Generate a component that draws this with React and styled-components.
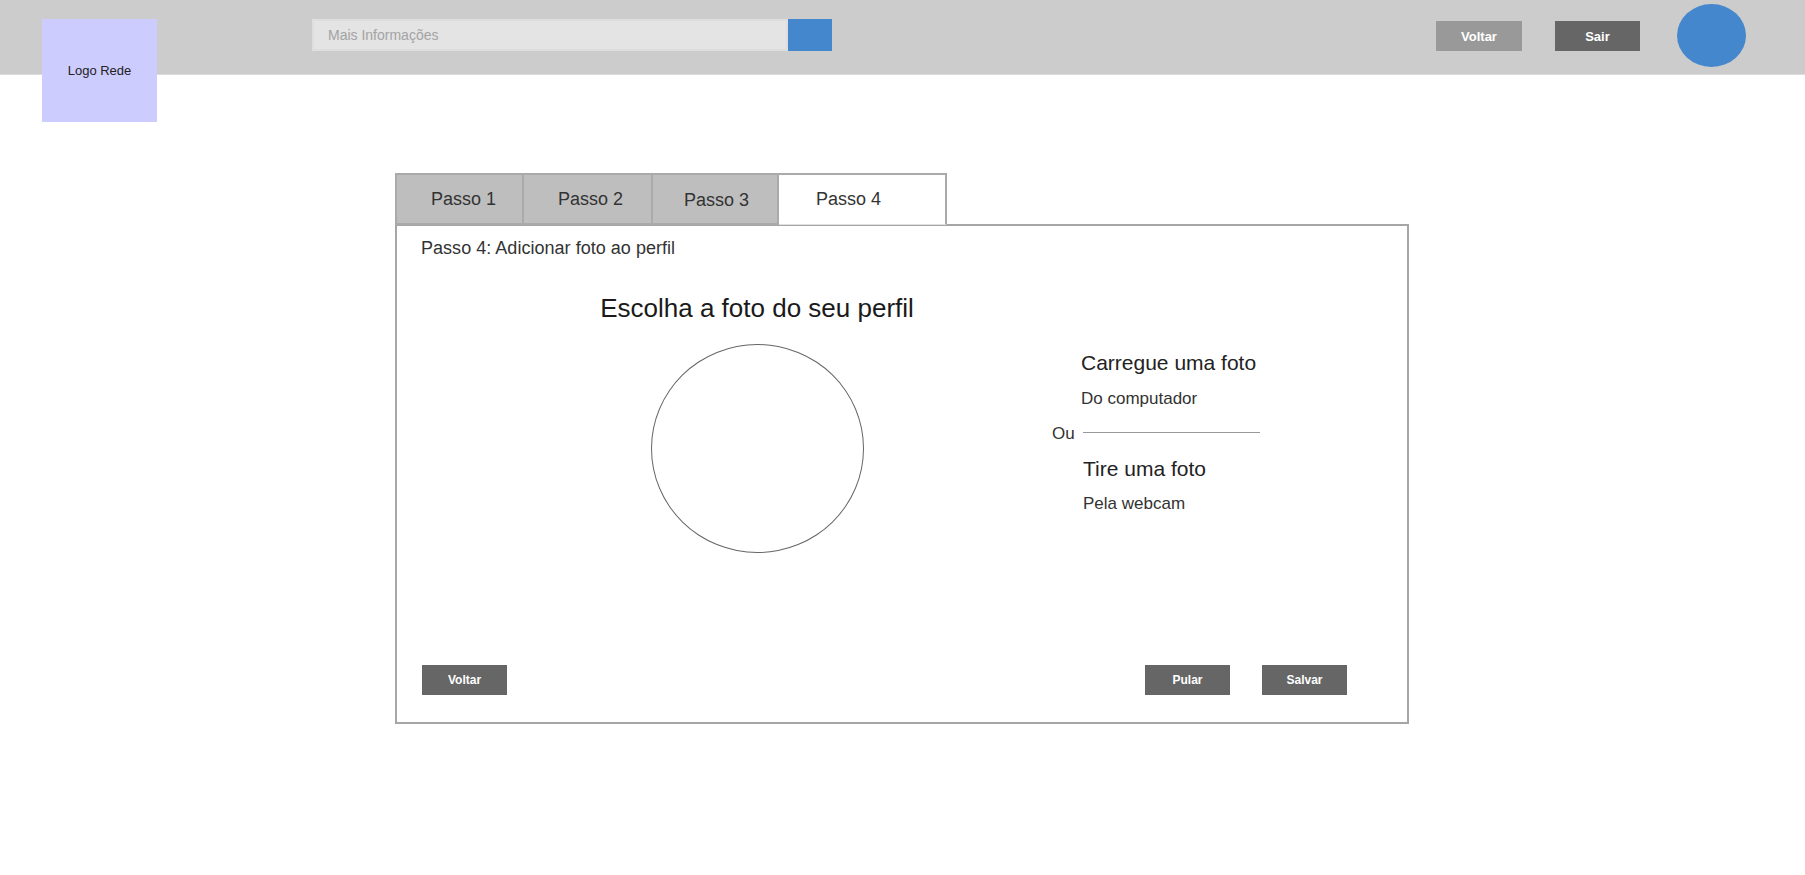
import styled, { createGlobalStyle } from 'styled-components';

const GlobalStyle = createGlobalStyle`
  html, body {
    margin: 0;
    padding: 0;
    background: #fff;
    font-family: "Liberation Sans", Arial, sans-serif;
  }
`;

function App() {
  return (
    <>
      <GlobalStyle />
      <Header>
        <Logo>Logo Rede</Logo>
        <Search>
          <SearchField>Mais Informações</SearchField>
          <SearchButton />
        </Search>
        <HeaderActions>
          <Button $width={86} $bg="#999999" $size={13}>Voltar</Button>
          <Button $width={85} $size={13} $gap={33}>Sair</Button>
          <Avatar />
        </HeaderActions>
      </Header>

      <Main>
        <Tabs>
          <Tab $width={129} $pad={34}>Passo 1</Tab>
          <Tab $width={129} $pad={34} $joined>Passo 2</Tab>
          <Tab $width={126} $pad={31} $joined $down>Passo 3</Tab>
          <ActiveTab>Passo 4</ActiveTab>
        </Tabs>
        <Panel>
          <PanelTitle>Passo 4: Adicionar foto ao perfil</PanelTitle>
          <Body>
            <PhotoColumn>
              <PhotoHeading>Escolha a foto do seu perfil</PhotoHeading>
              <PhotoCircle />
            </PhotoColumn>
            <Options>
              <Option>
                <OptionTitle>Carregue uma foto</OptionTitle>
                <OptionText>Do computador</OptionText>
              </Option>
              <Divider>
                <DividerLabel>Ou</DividerLabel>
                <DividerLine />
              </Divider>
              <Option $indent={2}>
                <OptionTitle>Tire uma foto</OptionTitle>
                <OptionText $tight>Pela webcam</OptionText>
              </Option>
            </Options>
          </Body>
          <Footer>
            <Button $width={85} $size={12}>Voltar</Button>
            <FooterRight>
              <Button $width={85} $size={12}>Pular</Button>
              <Button $width={85} $size={12} $gap={32}>Salvar</Button>
            </FooterRight>
          </Footer>
        </Panel>
      </Main>
    </>
  );
}

const Header = styled.header`
  display: flex;
  align-items: flex-start;
  box-sizing: border-box;
  height: 75px;
  padding-left: 42px;
  background: #cccccc;
  border-bottom: 1px solid #dcdcdc;
`;

const Logo = styled.div`
  display: flex;
  align-items: center;
  justify-content: center;
  flex-shrink: 0;
  width: 115px;
  height: 103px;
  margin-top: 19px;
  background: #ccccff;
  color: #222;
  font-size: 13px;
`;

const Search = styled.div`
  display: flex;
  margin: 19px 0 0 155px;
`;

const SearchField = styled.div`
  display: flex;
  align-items: center;
  box-sizing: border-box;
  width: 476px;
  height: 32px;
  padding-left: 14px;
  background: #e4e4e4;
  border: 2px solid #dedede;
  color: #a3a3a3;
  font-size: 14px;
`;

const SearchButton = styled.div`
  width: 44px;
  height: 32px;
  background: #4487cc;
`;

const HeaderActions = styled.div`
  display: flex;
  align-items: center;
  height: 72px;
  margin-left: 604px;
`;

const Button = styled.div`
  display: flex;
  align-items: center;
  justify-content: center;
  width: ${props => props.$width}px;
  height: 30px;
  margin-left: ${props => props.$gap || 0}px;
  background: ${props => props.$bg || '#666666'};
  color: #fff;
  font-size: ${props => props.$size}px;
  font-weight: 700;
`;

const Avatar = styled.div`
  width: 69px;
  height: 63px;
  margin: 0 0 2px 37px;
  border-radius: 50%;
  background: #4487cc;
`;

const Main = styled.main`
  width: 1014px;
  margin: 98px 0 0 395px;
`;

const Tabs = styled.div`
  display: flex;
  height: 52px;
  margin-bottom: -1px;
  position: relative;
  z-index: 1;
`;

const Tab = styled.div`
  box-sizing: border-box;
  width: ${props => props.$width}px;
  padding: ${props => (props.$down ? 15 : 14)}px 0 0 ${props => props.$pad}px;
  background: #bebebe;
  border: 2px solid #aaaaaa;
  border-left-width: ${props => (props.$joined ? 0 : 2)}px;
  color: #333;
  font-size: 18px;
`;

const ActiveTab = styled.div`
  box-sizing: border-box;
  width: 168px;
  padding: 14px 0 0 37px;
  background: #fff;
  border: 2px solid #aaaaaa;
  border-left: 0;
  border-bottom: 1px solid #e0e0e0;
  color: #333;
  font-size: 18px;
`;

const Panel = styled.section`
  display: flex;
  flex-direction: column;
  box-sizing: border-box;
  height: 500px;
  padding: 12px 24px 27px 24px;
  border: 2px solid #a6a6a6;
`;

const PanelTitle = styled.div`
  color: #333;
  font-size: 18px;
  line-height: 21px;
  letter-spacing: 0.03px;
`;

const Body = styled.div`
  display: flex;
  align-items: flex-start;
  margin-top: 35px;
`;

const PhotoColumn = styled.div`
  display: flex;
  flex-direction: column;
  align-items: center;
  width: 314px;
  margin-left: 179px;
`;

const PhotoHeading = styled.h2`
  margin: 0;
  color: #1a1a1a;
  font-size: 26px;
  font-weight: 400;
  line-height: 29px;
  white-space: nowrap;
`;

const PhotoCircle = styled.div`
  box-sizing: border-box;
  width: 213px;
  height: 209px;
  margin-top: 21px;
  border: 1px solid #666;
  border-radius: 50%;
`;

const Options = styled.div`
  display: flex;
  flex-direction: column;
  margin: 57px 0 0 138px;
`;

const Option = styled.div`
  margin-left: ${props => 29 + (props.$indent || 0)}px;
`;

const OptionTitle = styled.div`
  color: #222;
  font-size: 21px;
  line-height: 24px;
`;

const OptionText = styled.div`
  margin-top: ${props => (props.$tight ? 13 : 14)}px;
  color: #333;
  font-size: 17px;
  line-height: 20px;
`;

const Divider = styled.div`
  display: flex;
  align-items: center;
  margin: 15px 0 13px;
`;

const DividerLabel = styled.span`
  color: #333;
  font-size: 17px;
  line-height: 20px;
`;

const DividerLine = styled.div`
  width: 177px;
  height: 1px;
  margin: -3px 0 0 8px;
  background: #999;
`;

const Footer = styled.div`
  display: flex;
  justify-content: space-between;
  margin-top: auto;
  padding: 0 36px 0 1px;
`;

const FooterRight = styled.div`
  display: flex;
`;

export default App;
